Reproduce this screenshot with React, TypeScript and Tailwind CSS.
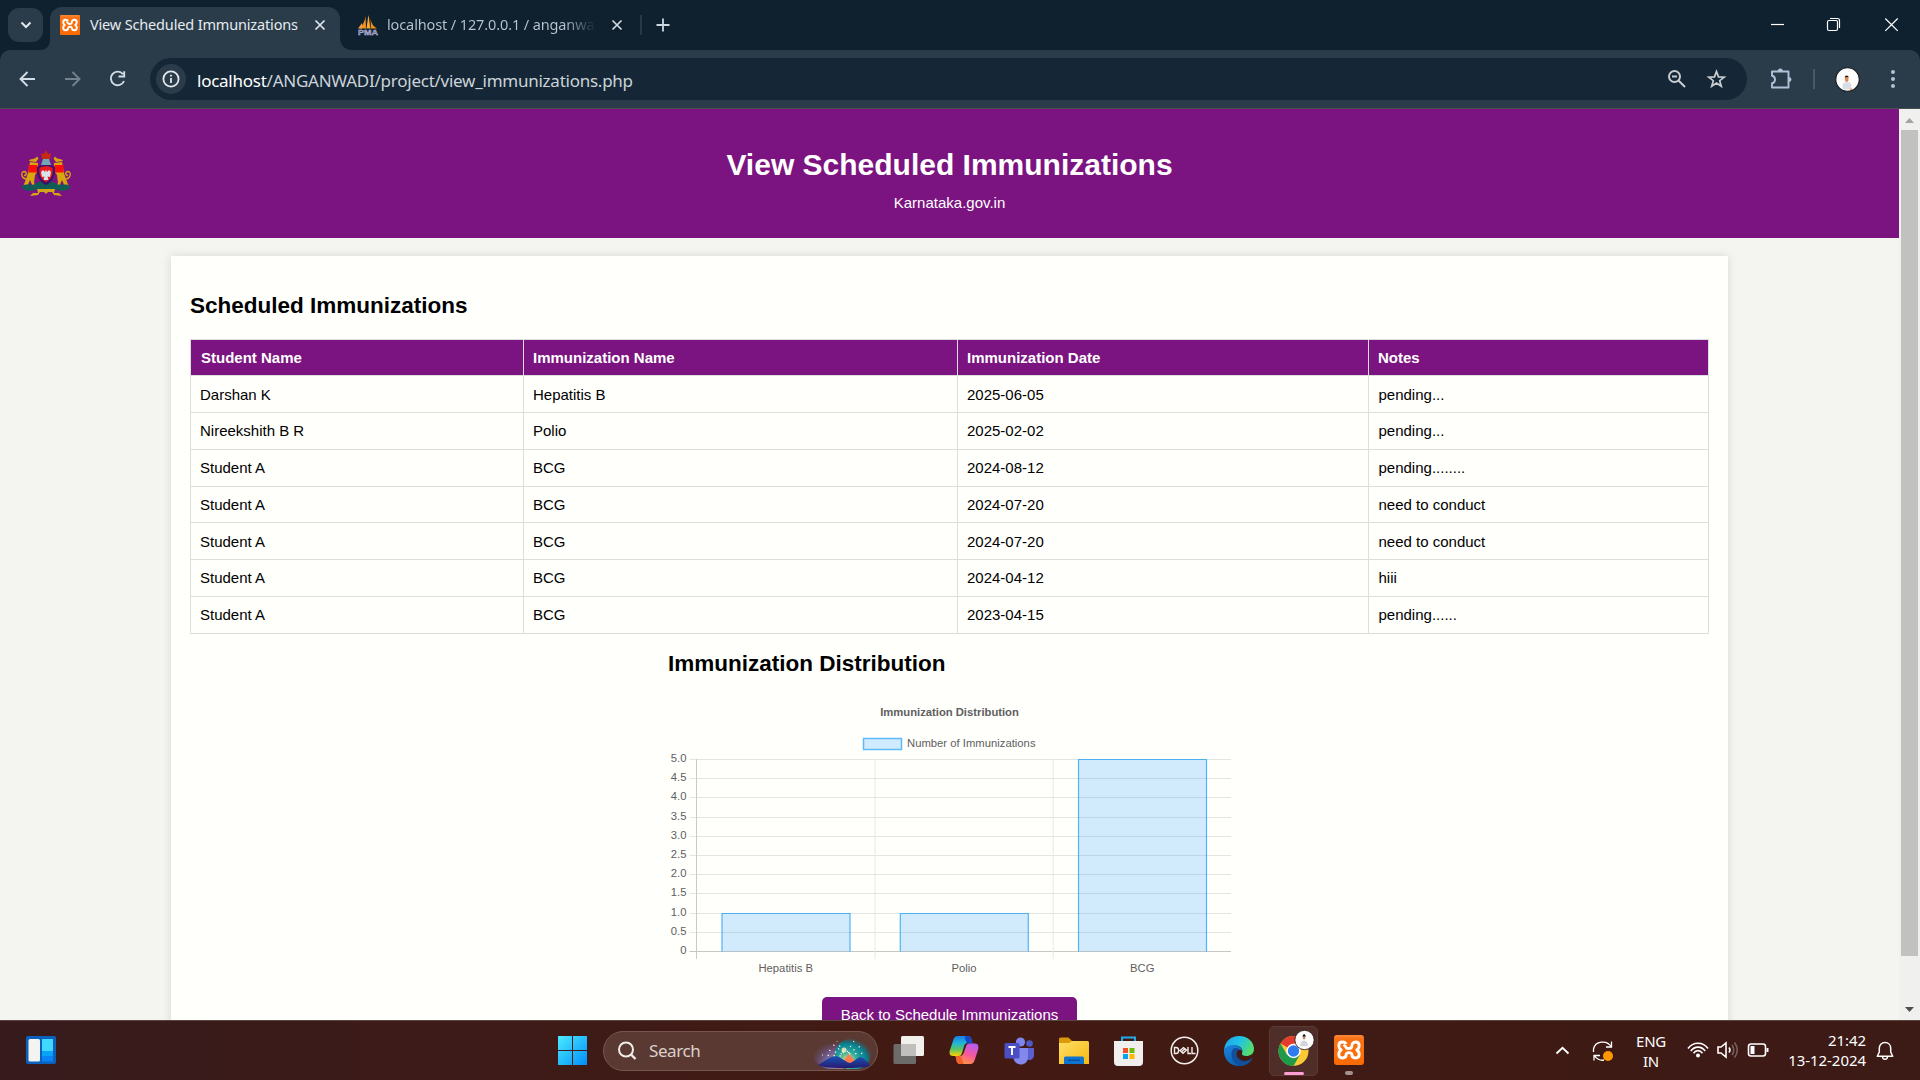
import React from "react";

const UI = "font-['Noto_Sans','Open_Sans',sans-serif]";
const PAGE = "font-['Liberation_Sans',Arial,sans-serif]";

function XamppMark({ size, r = 3 }: { size: number; r?: number }) {
  return (
    <svg width={size} height={size} viewBox="0 0 30 30" className="shrink-0">
      <defs>
        <linearGradient id="xo" x1="0" y1="0" x2="0" y2="1">
          <stop offset="0" stopColor="#fb8a3c" />
          <stop offset="0.12" stopColor="#f97316" />
          <stop offset="1" stopColor="#fb6a04" />
        </linearGradient>
      </defs>
      <rect width="30" height="30" rx={r} fill="url(#xo)" />
      <path
        d="M9.500 11.300C10.500 10.500 12 11 12 12.300C12.500 14 17.500 14 17.800 11.500C17.500 8.500 19.500 7 21.500 7C24 7 25.200 8.800 25.200 10.800C25.200 12.800 24.200 14 22.800 15C24.300 16 25.200 17.300 25.200 19.300C25.200 21.700 23.700 23 21.500 23C19 23 17.800 21.500 17.800 19.300C17.500 17 12.500 17 12.200 19.300C12.200 21.500 11 23 8.500 23C6.300 23 4.800 21.700 4.800 19.300C4.800 17.300 5.700 16 7.200 15C5.800 14 4.800 12.800 4.800 10.800C4.800 8.800 6 7 8.500 7C10 7 11.500 7.600 12 9"
        fill="none"
        stroke="#fff"
        strokeWidth="2.900"
        strokeLinejoin="round"
      />
    </svg>
  );
}

function CloseGlyph({ color = "#dfe6ec" }: { color?: string }) {
  return (
    <svg width="12" height="12" viewBox="0 0 12 12" className="shrink-0">
      <path d="M1.500 1.500L10.500 10.500M10.500 1.500L1.500 10.500" stroke={color} strokeWidth="1.700" />
    </svg>
  );
}

function Person({ size }: { size: number }) {
  return (
    <svg width={size} height={size} viewBox="0 0 25 25" className="shrink-0">
      <circle cx="12.500" cy="12.500" r="11.700" fill="#fdfdfd" stroke="#15181c" strokeWidth="1.100" />
      <path d="M8 22.500C6.800 18 8 15.800 10.500 15.300H13.500C16.200 15.800 17 18 16.200 22.500Z" fill="#d8dde6" />
      <ellipse cx="11.700" cy="11.800" rx="1.800" ry="3.200" fill="#e08a55" />
      <path d="M9.700 10.500C9.600 8.200 13.800 8.200 13.700 10.500L13 10L10.300 10.200Z" fill="#1c1614" />
      <circle cx="16.300" cy="22.300" r="1" fill="#e08a55" />
    </svg>
  );
}

function TabStrip() {
  return (
    <div className={`flex h-[50px] bg-[#0f202e] pl-[8px] ${UI}`}>
      <div className="mt-[8px] flex h-[34px] w-[35px] items-center justify-center rounded-[11px] bg-[#2a3b4a]">
        <svg width="12" height="8" viewBox="0 0 12 8">
          <path d="M1.500 1.500L6 6L10.500 1.500" fill="none" stroke="#e3e8ec" strokeWidth="2" />
        </svg>
      </div>
      <svg width="10" height="10" viewBox="0 0 10 10" className="-ml-[3px] self-end">
        <path d="M10 0V10H0C6 10 10 6 10 0Z" fill="#2a3b4a" />
      </svg>
      <div className="mt-[7px] flex h-[43px] w-[290px] items-center rounded-t-[12px] bg-[#2a3b4a] pb-[7px] pl-[10px]">
        <XamppMark size={20} r={1.5} />
        <span className="ml-[10px] w-[215px] whitespace-nowrap text-[14.500px] tracking-[-0.160px] text-[#e6ebef]">View Scheduled Immunizations</span>
        <span className="ml-[9px] flex">
          <CloseGlyph />
        </span>
      </div>
      <svg width="12" height="12" viewBox="0 0 12 12" className="self-end">
        <path d="M0 0V12H12C5 12 0 7 0 0Z" fill="#2a3b4a" />
      </svg>
      <div className="flex h-[50px] flex-1 items-center pl-[5px]">
        <svg width="22" height="21" viewBox="0 0 22 21">
          <path d="M8.500 1C8 6 6 10 2.500 13.500H9Z" fill="#f7931d" />
          <path d="M11.500 0C10.500 5 10.200 9 9.500 13.500H13.500C12.500 9 12.500 5 11.500 0Z" fill="#fba82e" />
          <path d="M13.500 3C14 8 16 11 20 13.500H14Z" fill="#f29111" />
          <path d="M5 8L1 13.500H5Z" fill="#e9a046" />
          <text x="1" y="20" fontSize="7.500" fontWeight="700" fill="#62659a" stroke="#d7d7ee" strokeWidth="0.350" textLength="20" lengthAdjust="spacingAndGlyphs" fontFamily="Liberation Sans">
            PMA
          </text>
        </svg>
        <span className="ml-[8px] w-[209px] overflow-hidden whitespace-nowrap bg-gradient-to-r from-[#b9c6d1] from-85% to-[#0f202e] bg-clip-text text-[14.500px] tracking-[-0.120px] text-transparent">
          localhost / 127.0.0.1 / anganwad
        </span>
        <span className="ml-[15px] flex">
          <CloseGlyph color="#d0d9e0" />
        </span>
        <span className="ml-[17px] h-[20px] w-[2px] bg-[#263848]" />
        <svg width="14" height="14" viewBox="0 0 14 14" className="ml-[14px]">
          <path d="M7 0.500V13.500M0.500 7H13.500" stroke="#cdd8e1" strokeWidth="1.800" />
        </svg>
      </div>
      <svg width="150" height="50" viewBox="0 0 150 50" fill="none" stroke="#fff" strokeWidth="1.200">
        <path d="M1 24.500H14" />
        <rect x="57.500" y="20.500" width="10" height="10" rx="1.500" />
        <path d="M60 18.500H67.500Q69.500 18.500 69.500 20.500V28" />
        <path d="M115.300 18.500L127.700 30.900M127.700 18.500L115.300 30.900" />
      </svg>
    </div>
  );
}

function Toolbar() {
  return (
    <div className="bg-[#0f202e]">
      <div className={`flex h-[59px] items-center rounded-t-[10px] border-b border-[#47504f] bg-[#2a3b4a] pl-[19px] ${UI}`}>
        <svg width="116" height="20" viewBox="0 0 116 20" fill="none" strokeWidth="1.900">
          <path d="M16 10H1.800M8.500 3L1.500 10L8.500 17" stroke="#d3dde6" />
          <path d="M46 10H60M53.500 3L60.500 10L53.500 17" stroke="#74828e" />
          <path d="M104 5.200A6.800 6.800 0 1 0 105 12M105.200 2.300V7.500H99.500" stroke="#d3dde6" />
        </svg>
        <div className="ml-[15px] flex h-[42px] w-[1597px] items-center rounded-full bg-[#152736] pl-[6px]">
          <span className="flex h-[30px] w-[30px] items-center justify-center rounded-full bg-[#2a3b4a]">
            <svg width="18" height="18" viewBox="0 0 18 18" fill="none" stroke="#e4e8ea" strokeWidth="1.800">
              <circle cx="9" cy="9" r="7.600" />
              <path d="M9 8V13M9 4.800V6.600" />
            </svg>
          </span>
          <span className="ml-[11px] mt-[2px] whitespace-nowrap text-[17px] leading-none tracking-[-0.250px] text-[#ccd3d9]">
            <span className="text-white">localhost</span>/ANGANWADI/project/view_immunizations.php
          </span>
          <span className="flex-1" />
          <svg width="60" height="20" viewBox="0 0 60 20" fill="none" stroke="#c9cdd0" strokeWidth="2">
            <circle cx="7.500" cy="7.500" r="5.500" />
            <path d="M11.500 11.500L18 18M5 7.500H10" />
            <path d="M49.500 2.500L51.500 7.900L57.200 8.200L52.700 11.700L54.300 17.300L49.500 14.100L44.700 17.300L46.300 11.700L41.800 8.200L47.500 7.900Z" strokeWidth="1.700" />
          </svg>
          <span className="w-[20px]" />
        </div>
        <svg width="22" height="22" viewBox="0 0 22 22" className="ml-[23px]" fill="none">
          <path d="M2 3.500H18.500V19.500H2V15.300C6 14.500 6 8.500 2 7.700Z" stroke="#afc3d8" strokeWidth="1.900" strokeLinejoin="round" />
          <path d="M7.800 3A2.500 2.500 0 0 1 12.800 3ZM19 9A2.500 2.500 0 0 1 19 14Z" fill="#afc3d8" />
        </svg>
        <span className="ml-[21px] h-[20px] w-[2px] bg-[#465a6b]" />
        <span className="ml-[20px] flex">
          <Person size={25} />
        </span>
        <svg width="4" height="20" viewBox="0 0 4 20" fill="#afc3d8" className="ml-[31px]">
          <circle cx="2" cy="3" r="2" />
          <circle cx="2" cy="10" r="2" />
          <circle cx="2" cy="17" r="2" />
        </svg>
      </div>
    </div>
  );
}

function Emblem() {
  const side = (
    <g>
      <path d="M9 11L17 12V20L14 24L13 32L17 37L12 36L9 29L6 36H2L5 28L7 22Z" fill="#d9a50c" />
      <path d="M8 10C9 7 14 9 16 5.500L17.500 7.500L15 11Z" fill="#d9a50c" />
      <path d="M7.500 14H16.500V21.500H7.500Z" fill="#fb0d0d" />
      <path d="M5 28C0 27 -0.500 21 3 20.500C6 20.500 6 24.500 3 24.500" fill="none" stroke="#d9a50c" strokeWidth="1.300" />
    </g>
  );
  return (
    <svg width="52" height="48" viewBox="0 0 52 48" className="shrink-0">
      <g transform="translate(1 1)">{side}</g>
      <g transform="translate(51 1) scale(-1 1)">{side}</g>
      <path d="M1 37C6 32 11 37 17 33C22 30 30 30 35 33C41 37 46 32 51 37C48 41 41 42 34 39H18C11 42 4 41 1 37Z" fill="#115c55" />
      <path d="M17 17C21 14 31 14 35 17C36 27 31 33 26 35C21 33 16 27 17 17Z" fill="#3d1168" />
      <path d="M19.500 18C22 15.500 30 15.500 32.500 18C33.500 26 30 30 26 32C22 30 18.500 26 19.500 18Z" fill="#e81a1f" />
      <path d="M21 22L23 20L25 22L26 19.500L27 22L29 20L31 22L30 27L27.500 26.500L28.500 30H23.500L24.500 26.500L22 27Z" fill="#d9e3ea" />
      <path d="M21 3L24 4L26 0L28 4L31 3L30 9H22Z" fill="#c62b12" />
      <path d="M23 9H29L31 15H21Z" fill="#6fa7b5" />
      <path d="M10 46L13 43H18L17 39H35L34 43H39L42 46L34 45L32 42H28L26 44L24 42H20L18 45Z" fill="#d3a616" />
    </svg>
  );
}

const ROWS = [
  ["Darshan K", "Hepatitis B", "2025-06-05", "pending..."],
  ["Nireekshith B R", "Polio", "2025-02-02", "pending..."],
  ["Student A", "BCG", "2024-08-12", "pending........"],
  ["Student A", "BCG", "2024-07-20", "need to conduct"],
  ["Student A", "BCG", "2024-07-20", "need to conduct"],
  ["Student A", "BCG", "2024-04-12", "hiii"],
  ["Student A", "BCG", "2023-04-15", "pending......"],
];
const COLS = "grid grid-cols-[333px_434px_411px_340px]";

function ScheduleTable() {
  return (
    <div className="w-[1519px] border-l border-t border-[#dddddd] text-[15px]">
      <div className={`${COLS} h-[36px] bg-[#7b1480] font-bold text-white`}>
        {["Student Name", "Immunization Name", "Immunization Date", "Notes"].map((h, i) => (
          <div key={h} className={`flex items-center border-b border-r border-[#dddddd] pt-[2px] ${i ? "pl-[9px]" : "pl-[10px]"}`}>
            {h}
          </div>
        ))}
      </div>
      {ROWS.map((r, i) => (
        <div key={i} className={`${COLS} ${i === 3 ? "h-[36px]" : "h-[37px]"} text-black`}>
          {r.map((c, j) => (
            <div key={j} className={`flex items-center border-b border-r border-[#dddddd] ${j === 3 ? "pl-[9.500px]" : "pl-[9px]"} ${i === 0 || i === 4 ? "pt-[3px]" : "pt-px"}`}>
              {c}
            </div>
          ))}
        </div>
      ))}
    </div>
  );
}

const BARS = [
  { label: "Hepatitis B", value: 1, x: 722, cx: 785.7 },
  { label: "Polio", value: 1, x: 900.3, cx: 964 },
  { label: "BCG", value: 5, x: 1078.5, cx: 1142.200 },
];

function DistributionChart() {
  const y = (v: number) => Math.round(951 - v * 38.4) + 0.5;
  return (
    <svg width="562" height="281" viewBox="668 697 562 281" className="overflow-visible" fontFamily="Liberation Sans, Arial, sans-serif" fontSize="11.250" fill="#606060">
      <text x="949.500" y="716" fontWeight="700" textAnchor="middle">Immunization Distribution</text>
      <rect x="863.500" y="738.500" width="38" height="11" fill="#d0eaff" stroke="#5dbcf7" strokeWidth="1.500" />
      <text x="907" y="747" textLength="128.500">Number of Immunizations</text>
      {[0, 0.5, 1, 1.5, 2, 2.5, 3, 3.5, 4, 4.5, 5].map((v) => (
        <g key={v}>
          <path d={`M689.500 ${y(v)}H1231`} stroke={v ? "#e4e4e1" : "#c6c6c4"} />
          <text x="686.500" y={y(v) + 2.800} textAnchor="end">{v ? v.toFixed(1) : "0"}</text>
        </g>
      ))}
      <path d="M696.500 759V959" stroke="#c9c9c7" />
      <path d="M875 759V959M1053.200 759V959" stroke="#e8e8e5" />
      {BARS.map((b) => (
        <g key={b.label}>
          <rect x={b.x} y={y(b.value)} width="128" height={951.5 - y(b.value)} fill="#2fa4ff" fillOpacity="0.220" />
          <path d={`M${b.x} 951.500V${y(b.value)}H${b.x + 128}V951.500`} fill="none" stroke="#36a9f3" strokeOpacity="0.850" strokeWidth="1.200" />
          <text x={b.cx} y="972" textAnchor="middle">{b.label}</text>
        </g>
      ))}
    </svg>
  );
}

function Page() {
  return (
    <div className={`flex h-[911px] overflow-hidden bg-[#f4f4f1] ${PAGE}`}>
      <div className="h-full w-[1899px] overflow-hidden">
        <header className="grid h-[129px] grid-cols-[72px_1fr_72px] items-center bg-[#7b1480] text-white">
          <div className="pl-[20px]">
            <Emblem />
          </div>
          <div className="flex flex-col items-center pt-[11px]">
            <h1 className="text-[30px] font-bold leading-[36px]">View Scheduled Immunizations</h1>
            <p className="mt-[11px] text-[15px] leading-[18px]">Karnataka.gov.in</p>
          </div>
        </header>
        <main className="ml-[171px] mt-[18px] h-[900px] w-[1557px] bg-[#fffffc] px-[19px] pt-[36px] shadow-[0_0_9px_rgba(0,0,0,0.12)]">
          <h2 className="mb-[19px] text-[22.500px] font-bold leading-[28px] text-black">Scheduled Immunizations</h2>
          <ScheduleTable />
          <section className="ml-[478px] mt-[16px] w-[562px]">
            <h2 className="text-[22.500px] font-bold leading-[28px] text-black">Immunization Distribution</h2>
            <div className="mt-[19px]">
              <DistributionChart />
            </div>
          </section>
          <div className="mt-[19px] flex justify-center">
            <button className="h-[36px] w-[255px] whitespace-nowrap rounded-[5px] bg-[#7b1480] text-[15px] text-white">Back to Schedule Immunizations</button>
          </div>
        </main>
      </div>
      <div className="flex h-full w-[21px] flex-col items-center bg-[#f0f0ee]">
        <svg width="21" height="21" viewBox="0 0 21 21">
          <path d="M6 14H15L10.500 9Z" fill="#a3a3a2" />
        </svg>
        <div className="w-[17px] flex-1 bg-[#c1c1bf]" />
        <svg width="21" height="64" viewBox="0 0 21 64">
          <path d="M6 51H15L10.500 56Z" fill="#505050" />
        </svg>
      </div>
    </div>
  );
}

function Slot({ children }: { children: React.ReactNode }) {
  return <div className="flex h-[60px] w-[55px] shrink-0 items-center justify-center">{children}</div>;
}

function SearchArt() {
  return (
    <svg width="58" height="32" viewBox="0 0 58 32">
      <defs>
        <radialGradient id="sa1" cx="0.600" cy="0.750" r="0.650">
          <stop offset="0" stopColor="#d9b070" />
          <stop offset="0.500" stopColor="#74619a" />
          <stop offset="1" stopColor="#6a5088" stopOpacity="0" />
        </radialGradient>
        <radialGradient id="sa2" cx="0.350" cy="0.700" r="0.700">
          <stop offset="0" stopColor="#f2e47c" />
          <stop offset="0.400" stopColor="#2aa7a0" />
          <stop offset="0.750" stopColor="#087f90" />
          <stop offset="1" stopColor="#087f90" stopOpacity="0" />
        </radialGradient>
        <linearGradient id="sa3" x1="0" y1="0" x2="0" y2="1">
          <stop offset="0" stopColor="#1757b5" />
          <stop offset="1" stopColor="#271a72" />
        </linearGradient>
      </defs>
      <ellipse cx="22" cy="17" rx="22" ry="16" fill="url(#sa1)" />
      <ellipse cx="40" cy="17" rx="18" ry="16" fill="url(#sa2)" />
      <path d="M28 27L36 17L44 27Z" fill="#ff7a4d" />
      <path d="M5 28C12 24 18 19 22 19C27 19 32 25 37 26C42 24 45 20 48 20C52 22 56 26 57 29Q50 31 30 31T5 28Z" fill="url(#sa3)" />
      <g stroke="#fff6d8" strokeWidth="1.100" strokeDasharray="1.500 4.500">
        <path d="M31 16L18 6M30 15L24 4M34 15L41 4M35 16L48 9M36 17L54 16M29 17L12 12M28 19L9 18" />
      </g>
      <circle cx="31" cy="13" r="2.500" fill="#fff3c8" fillOpacity="0.800" />
    </svg>
  );
}

function Taskbar() {
  return (
    <div className={`flex h-[60px] items-center border-t border-[#5a4540] bg-gradient-to-r from-[#371b1c] via-[#431a13] to-[#3c1a16] text-white ${UI}`}>
      <svg width="30" height="28" viewBox="0 0 30 28" className="mb-[2px] ml-[26px]">
        <rect width="30" height="28" rx="2" fill="#0a62bd" />
        <rect x="2.500" y="3" width="11.500" height="22.500" rx="1.500" fill="#f3f4f2" />
        <path d="M16 3H27V15H16Z" fill="#42d7ff" />
        <path d="M16 15H27V20H16Z" fill="#0aa3f7" />
        <path d="M16 20H27V25.500H16Z" fill="#0a84f5" />
      </svg>
      <svg width="29" height="29" viewBox="0 0 29 29" className="ml-[502px]">
        <defs>
          <linearGradient id="win" gradientUnits="userSpaceOnUse" x1="0" y1="0" x2="29" y2="29">
            <stop offset="0" stopColor="#4cebff" />
            <stop offset="1" stopColor="#008efa" />
          </linearGradient>
        </defs>
        <path d="M0 0H14V14H0ZM15 0H29V14H15ZM0 15H14V29H0ZM15 15H29V29H15Z" fill="url(#win)" />
      </svg>
      <div className="ml-[16px] flex h-[40px] w-[275px] items-center rounded-full border border-[#77564f] bg-[#5b3933] pl-[13px]">
        <svg width="20" height="20" viewBox="0 0 20 20" fill="none" stroke="#f0ece9">
          <circle cx="9" cy="8.500" r="7" strokeWidth="2" />
          <path d="M14 13.500L18.500 18" strokeWidth="2.400" />
        </svg>
        <span className="ml-[12px] w-[164px] text-[17px] tracking-[-0.400px] text-[#dbd0cc]">Search</span>
        <div className="mt-[4px] flex">
          <SearchArt />
        </div>
      </div>
      <div className="w-[3px]" />
      <Slot>
        <svg width="31" height="28" viewBox="0 0 31 28" className="mb-[2px]">
          <rect x="0.500" y="8" width="22.500" height="20" rx="1.500" fill="#6d6b69" />
          <rect x="8" y="0" width="23" height="20" rx="1.500" fill="#f2f0ed" />
          <rect x="8" y="8" width="15" height="12" fill="#c0bfbd" />
        </svg>
      </Slot>
      <Slot>
        <svg width="30" height="28" viewBox="0 0 30 28" className="mb-[2px]">
          <defs>
            <linearGradient id="cp1" x1="0" y1="0" x2="0" y2="1">
              <stop offset="0" stopColor="#1a7de8" />
              <stop offset="0.350" stopColor="#1fb4d8" />
              <stop offset="0.650" stopColor="#56c46a" />
              <stop offset="1" stopColor="#ffd000" />
            </linearGradient>
            <linearGradient id="cp2" x1="0.700" y1="0" x2="0.300" y2="1">
              <stop offset="0" stopColor="#b55cf2" />
              <stop offset="0.500" stopColor="#f5589c" />
              <stop offset="1" stopColor="#ff9a3c" />
            </linearGradient>
          </defs>
          <path d="M8.500 0H19C21 0 22 1.500 22.500 3.500L23.500 7H19C16.500 7 15.500 8.500 15 10.500L13 17C12.400 19 11.500 20 9.500 20H4C0.500 20 0 17 1 14L4.500 3.500C5.200 1.300 6.500 0 8.500 0Z" fill="url(#cp1)" />
          <path d="M17 0H19C21 0 22 1.500 22.500 3.500L23.500 7.500H19C17 7 17 4 15.500 2Z" fill="#1648c4" />
          <path d="M21.500 28H11C9 28 8 26.500 7.500 24.500L6.500 20H10C13 20 14 19 14.800 16.500L17 10.500C17.600 8.500 18.500 7.500 20.500 7.500H26C29.500 7.500 30 11 29 14L25.500 24.500C24.800 26.700 23.500 28 21.500 28Z" fill="url(#cp2)" />
          <path d="M6.500 20H11C13 20.500 13 24 15 28H11C9 28 8 26.500 7.500 24.500Z" fill="#f4602c" />
        </svg>
      </Slot>
      <Slot>
        <svg width="30" height="28" viewBox="0 0 30 28">
          <circle cx="25.500" cy="6.500" r="3.300" fill="#5059c9" />
          <path d="M22 11H30V18C30 24 23 24 22 21Z" fill="#5b5fd0" />
          <circle cx="16.500" cy="5" r="4.600" fill="#7f85ee" />
          <path d="M9.500 11H24V20C24 30 9.500 30 9.500 20Z" fill="#8388ec" />
          <rect x="0.500" y="6" width="15" height="15.500" rx="1.500" fill="#4b4fc4" />
          <path d="M4.500 10H11.500M8 10V18" stroke="#fff" strokeWidth="1.900" />
        </svg>
      </Slot>
      <Slot>
        <svg width="30" height="28" viewBox="0 0 30 28">
          <defs>
            <linearGradient id="fo" x1="0" y1="0" x2="1" y2="1">
              <stop offset="0" stopColor="#ffdf66" />
              <stop offset="1" stopColor="#f6b912" />
            </linearGradient>
          </defs>
          <path d="M0 2Q0 0.500 1.500 0.500H9.500L13 4V10H0Z" fill="#dc9a0a" />
          <path d="M0 6H10L13 4H28.500Q30 4 30 5.500V27H0Z" fill="url(#fo)" />
          <path d="M5 27V21Q5 19.500 6.500 19.500H23.500Q25 19.500 25 21V27Z" fill="#0f74cf" />
          <path d="M9 23.300H21" stroke="#0a4fa0" strokeWidth="1.300" />
        </svg>
      </Slot>
      <Slot>
        <svg width="29" height="30" viewBox="0 0 29 30">
          <path d="M8 6V1.500H21V6" fill="none" stroke="#22a9ea" strokeWidth="2" />
          <path d="M0 5H29V26Q29 30 25 30H4Q0 30 0 26Z" fill="#f0efed" />
          <path d="M9 12H14V17H9Z" fill="#f25022" />
          <path d="M15.500 12H20.500V17H15.500Z" fill="#6fba06" />
          <path d="M9 18H14V23H9Z" fill="#0aa2ee" />
          <path d="M15.500 18H20.500V23H15.500Z" fill="#ffb900" />
        </svg>
      </Slot>
      <Slot>
        <svg width="29" height="29" viewBox="0 0 29 29" fill="none" stroke="#f3eeec" className="ml-px">
          <circle cx="14.500" cy="14.500" r="13.300" strokeWidth="1.500" />
          <path d="M4.500 11.500V17.500H6C9.500 17.500 9.500 11.500 6 11.500ZM10 14.500L13.500 11.700L16.500 14L13 17.200ZM11.500 15.800L15 12.800M18 11V17.500H21M22 11V17.500H25.500" strokeWidth="1.400" />
        </svg>
      </Slot>
      <Slot>
        <svg width="30" height="30" viewBox="0 0 30 30">
          <defs>
            <linearGradient id="ed1" x1="0" y1="0" x2="1" y2="0.400">
              <stop offset="0" stopColor="#1fa0e8" />
              <stop offset="0.550" stopColor="#1fc3e8" />
              <stop offset="1" stopColor="#52dc70" />
            </linearGradient>
            <linearGradient id="ed2" x1="0" y1="0" x2="0.700" y2="1">
              <stop offset="0" stopColor="#1a86e0" />
              <stop offset="1" stopColor="#0c59a4" />
            </linearGradient>
          </defs>
          <path d="M0 14C1 5 7 0 15 0C24 0 30 6 30 13C30 18 26 20 22.500 20C19 20 17.500 18.800 18 17.500C19.500 14 17 10 12 9.500C6 9 2 11 0 14Z" fill="url(#ed1)" />
          <path d="M0 14C2 9.500 8 8.500 12 9.500C15 10.200 18 12 18 15C16 12.500 12.500 13.500 12.300 17.500C12 22 17 26 22.500 25C25 24.500 27 23 28.500 22C26 27 21 30 15 30C6 30 -0.500 23 0 14Z" fill="url(#ed2)" />
          <path d="M9 13C6 17 7 26 15 30C21 30 26 27 28.500 22C27 23 25 24.500 22.500 25C17 26 12 22 12.300 17.500C12.400 15 14 13.500 15.500 13.200C13 11.500 10.500 11.500 9 13Z" fill="#0f4f9e" />
        </svg>
      </Slot>
      <Slot>
        <div className="flex h-[50px] w-[49px] flex-col items-center rounded-[5px] border border-[#5b3a35] bg-[#4f2d28] pt-[3px]">
          <svg width="42" height="38" viewBox="-2.500 0 42 38" className="overflow-visible">
            <circle cx="18" cy="21" r="15" fill="#fcc934" />
            <path d="M18 21L5 13.500A15 15 0 0 1 31 13.500H18Z" fill="#e33b2e" />
            <path d="M5 13.500A15 15 0 0 0 18 36L24.500 24.500L18 21L11.500 24.800Z" fill="#1e9a4b" />
            <circle cx="18" cy="21" r="7.200" fill="#fff" />
            <circle cx="18" cy="21" r="5.700" fill="#2f7bf0" />
            <g transform="translate(18.500 -0.500) scale(0.840)">
              <circle cx="12.500" cy="12.500" r="11.500" fill="#fdfdfd" stroke="#2a1c1a" />
              <path d="M7.500 20C7 16 9 13.500 12 13C15 13.500 17 16 16.500 20Z" fill="#d4d6dc" />
              <ellipse cx="12" cy="9" rx="1.700" ry="3" fill="#c08a6a" />
              <path d="M10.300 8.200C10.200 5 14 5 13.800 8.200Z" fill="#1c1614" />
            </g>
          </svg>
          <span className="mt-[4px] h-[4px] w-[20px] rounded-full bg-[#ff9ed2]" />
        </div>
      </Slot>
      <Slot>
        <div className="flex flex-col items-center pt-[9px]">
          <XamppMark size={30} />
          <span className="mt-[6px] h-[4px] w-[8px] rounded-full bg-[#a3928e]" />
        </div>
      </Slot>
      <div className="flex-1" />
      <svg width="15" height="9" viewBox="0 0 15 9" className="shrink-0">
        <path d="M1.500 7.500L7.500 1.800L13.500 7.500" fill="none" stroke="#fff" strokeWidth="1.900" />
      </svg>
      <svg width="22" height="22" viewBox="0 0 22 22" className="ml-[22px] shrink-0" fill="none" stroke="#fff" strokeWidth="1.300">
        <path d="M1.500 12V9C3 1.500 14.500 -1 19.500 7M19.500 1.500V7H14M12 20C8 21 4 18.500 2.500 15.500M2 20.500V15.500H8" />
        <circle cx="16" cy="16" r="5" fill="#ff9800" stroke="none" />
      </svg>
      <div className="ml-[19px] flex w-[36px] shrink-0 flex-col items-center text-[15px] leading-[20px] tracking-[-0.300px]">
        <span>ENG</span>
        <span>IN</span>
      </div>
      <svg width="84" height="20" viewBox="0 0 84 20" className="mb-[2px] ml-[18px] shrink-0" fill="none" stroke="#fff" strokeWidth="1.600">
        <path d="M1 8.500C6 1.500 16 1.500 21 8.500M3.800 11C7.500 5.800 14.500 5.800 18.200 11M6.500 13.300C9 9.700 13 9.700 15.500 13.300" />
        <circle cx="11" cy="15.500" r="2" fill="#fff" stroke="none" />
        <path d="M31 7H34L39 3V17L34 13H31Z" />
        <path d="M42 7.500Q44 10 42 12.500" />
        <path d="M45 5Q48.500 10 45 15M47.500 2.500Q53 10 47.500 17.500" stroke="#77605b" />
        <rect x="61.500" y="4" width="17" height="12" rx="2.500" />
        <path d="M79.500 8H81.500V12H79.500Z" fill="#fff" stroke="none" />
        <rect x="63.500" y="6" width="4" height="8" fill="#fff" stroke="none" />
      </svg>
      <div className="mb-px ml-[15px] flex w-[80px] shrink-0 flex-col items-end whitespace-nowrap text-[15px] leading-[20px] tracking-[-0.050px]">
        <span>21:42</span>
        <span>13-12-2024</span>
      </div>
      <svg width="18" height="20" viewBox="0 0 18 20" className="ml-[10px] mr-[26px] shrink-0" fill="none" stroke="#fff" strokeWidth="1.500">
        <path d="M9 1.500C5.500 1.500 3.300 4 3.300 7.300V11L1.300 15.200H16.700L14.700 11V7.300C14.700 4 12.500 1.500 9 1.500ZM6.500 16C7 19 11 19 11.500 16" strokeLinejoin="round" />
      </svg>
    </div>
  );
}

export default function App() {
  return (
    <div className="flex h-[1080px] w-[1920px] flex-col overflow-hidden">
      <TabStrip />
      <Toolbar />
      <Page />
      <Taskbar />
    </div>
  );
}
